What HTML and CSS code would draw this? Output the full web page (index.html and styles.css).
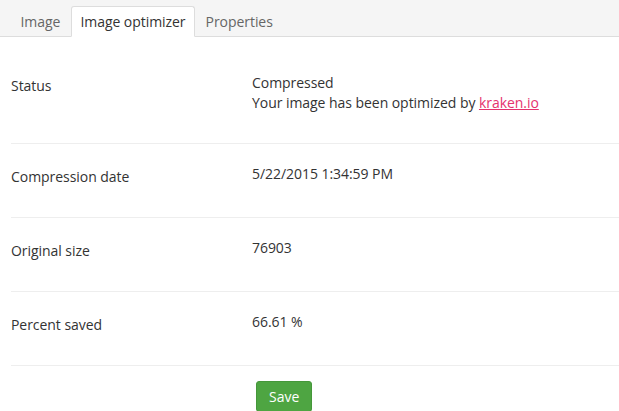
FILE: index.html
```html
<!DOCTYPE html>
<html>
<head>
<meta charset="utf-8">
<link rel="stylesheet" href="styles.css">
</head>
<body>
<div class="tabbar">
  <div class="tab">Image</div>
  <div class="tab active">Image optimizer</div>
  <div class="tab">Properties</div>
</div>
<div class="content">
  <div class="row first">
    <div class="label">Status</div>
    <div class="value">Compressed<br>Your image has been optimized by <a href="#">kraken.io</a></div>
  </div>
  <div class="row">
    <div class="label">Compression date</div>
    <div class="value">5/22/2015 1:34:59 PM</div>
  </div>
  <div class="row">
    <div class="label">Original size</div>
    <div class="value">76903</div>
  </div>
  <div class="row">
    <div class="label">Percent saved</div>
    <div class="value">66.61 %</div>
  </div>
  <div class="actions">
    <button class="btn">Save</button>
  </div>
</div>
</body>
</html>
```
FILE: styles.css
```css
* { box-sizing: border-box; }
html, body { margin: 0; padding: 0; background: #fff; }
body {
  font-family: "Open Sans", "Liberation Sans", sans-serif;
  font-size: 14px;
  line-height: 20px;
  letter-spacing: -0.05px;
  color: #333;
  overflow: hidden;
}
.tabbar {
  display: flex;
  align-items: flex-end;
  height: 37px;
  background: #f5f5f5;
  border-bottom: 1px solid #ddd;
  padding-left: 10px;
}
.tab {
  height: 31px;
  padding: 5px 9.5px 0;
  margin-bottom: -1px;
  color: #666;
  border: 1px solid transparent;
  border-radius: 3px 3px 0 0;
}
.tab.active {
  padding: 5px 8.5px 0;
  background: #fff;
  color: #333;
  border-color: #ddd;
  border-bottom-color: #fff;
}
.content {
  padding: 16px 0 0 11px;
}
.row {
  display: flex;
  padding: 20px 0 30px;
  border-bottom: 1px solid #eee;
}
.label {
  width: 241px;
  padding-top: 3px;
}
.value {
  flex: 1;
}
.value a { color: #e5336e; text-decoration: underline; }
.actions {
  padding: 15px 0 0 245px;
}
.btn {
  font-family: inherit;
  font-size: 14px;
  color: #fff;
  background: #4ea542;
  border: 1px solid #45973a;
  border-radius: 3px;
  height: 31px;
  padding: 0 12px;
}
```
